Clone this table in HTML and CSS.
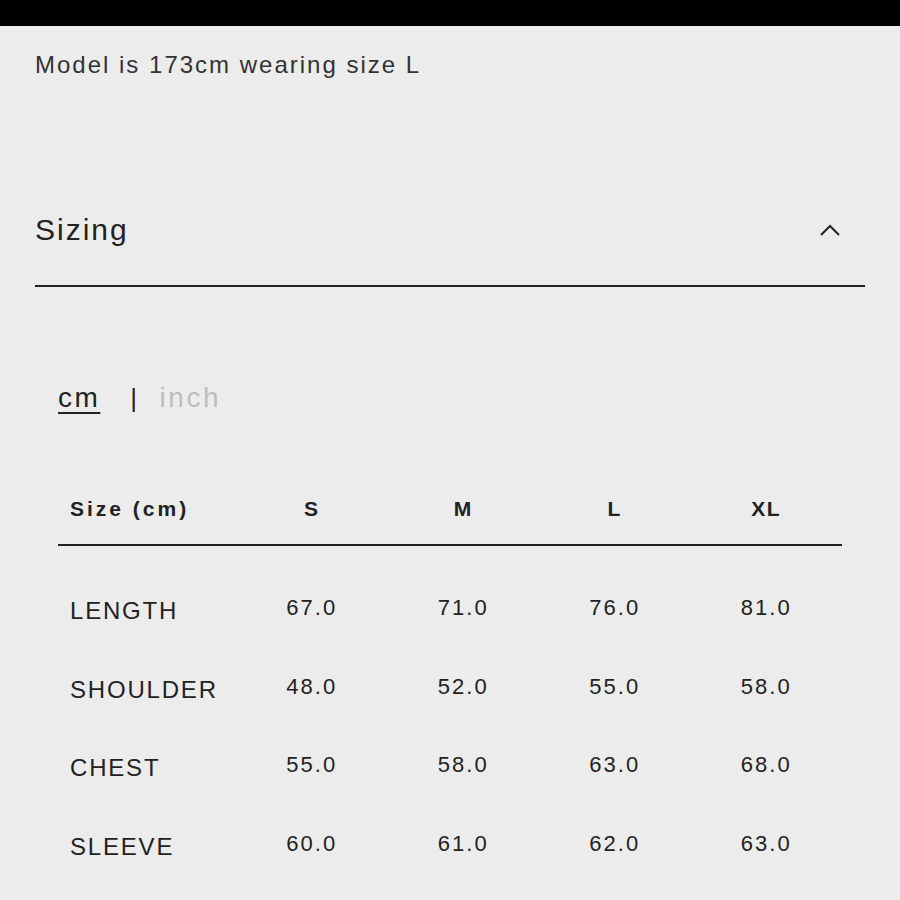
FILE: index.html
```html
<!DOCTYPE html>
<html>
<head>
<meta charset="utf-8">
<link rel="stylesheet" href="styles.css">
</head>
<body>
<div class="topbar"></div>
<div class="page">
  <p class="model">Model is 173cm wearing size L</p>
  <div class="acc-head">
    <span class="acc-title">Sizing</span>
    <svg class="chev" width="22" height="14" viewBox="0 0 22 14"><path d="M2 12 L11 3 L20 12" fill="none" stroke="#222" stroke-width="2"/></svg>
  </div>
  <div class="units">
    <span class="unit active">cm</span>
    <span class="sep">|</span>
    <span class="unit off">inch</span>
  </div>
  <div class="table">
    <div class="row head">
      <div class="lbl">Size (cm)</div><div>S</div><div>M</div><div>L</div><div>XL</div>
    </div>
    <div class="row">
      <div class="lbl">LENGTH</div><div>67.0</div><div>71.0</div><div>76.0</div><div>81.0</div>
    </div>
    <div class="row">
      <div class="lbl">SHOULDER</div><div>48.0</div><div>52.0</div><div>55.0</div><div>58.0</div>
    </div>
    <div class="row">
      <div class="lbl">CHEST</div><div>55.0</div><div>58.0</div><div>63.0</div><div>68.0</div>
    </div>
    <div class="row">
      <div class="lbl">SLEEVE</div><div>60.0</div><div>61.0</div><div>62.0</div><div>63.0</div>
    </div>
  </div>
</div>
</body>
</html>
```
FILE: styles.css
```css
html, body {
  margin: 0;
  padding: 0;
  background: #ececec;
  font-family: "Liberation Sans", Arial, sans-serif;
  color: #222;
}
.topbar {
  height: 26px;
  background: #000;
}
.page {
  padding: 0 35px;
}
.model {
  margin: 0;
  padding-top: 24px;
  font-size: 24px;
  line-height: 30px;
  letter-spacing: 2px;
  color: #333;
}
.acc-head {
  margin-top: 133px;
  height: 72px;
  border-bottom: 2px solid #222;
  display: flex;
  justify-content: space-between;
  align-items: flex-start;
}
.acc-title {
  font-size: 30px;
  line-height: 34px;
  letter-spacing: 2px;
  color: #222;
}
.chev {
  margin-top: 10px;
  margin-right: 24px;
}
.units {
  margin: 94px 0 0 23px;
  display: flex;
  align-items: baseline;
  font-size: 28px;
  line-height: 34px;
  letter-spacing: 2.5px;
}
.unit.active {
  text-decoration: underline;
  text-underline-offset: 5px;
  text-decoration-thickness: 2px;
  color: #222;
}
.sep {
  margin: 0 20px 0 30px;
  color: #222;
  font-size: 26px;
}
.unit.off {
  color: #bdbdbd;
}
.table {
  margin: 75px 0 0 23px;
  width: 784px;
}
.row {
  display: grid;
  grid-template-columns: 178px repeat(4, 1fr);
  height: 78.5px;
  align-items: center;
  text-align: center;
  font-size: 22px;
  letter-spacing: 2px;
  color: #222;
}
.row .lbl {
  text-align: left;
  padding-left: 12px;
  font-size: 24px;
  letter-spacing: 1.8px;
  position: relative;
  top: 3px;
}
.row.head {
  height: 54px;
  border-bottom: 2px solid #222;
  font-weight: bold;
  font-size: 21px;
  letter-spacing: 1.5px;
  margin-bottom: 23px;
}
.row.head .lbl {
  font-size: 21px;
  letter-spacing: 3px;
  top: -8px;
}
.row.head div {
  position: relative;
  top: -8px;
}
```
